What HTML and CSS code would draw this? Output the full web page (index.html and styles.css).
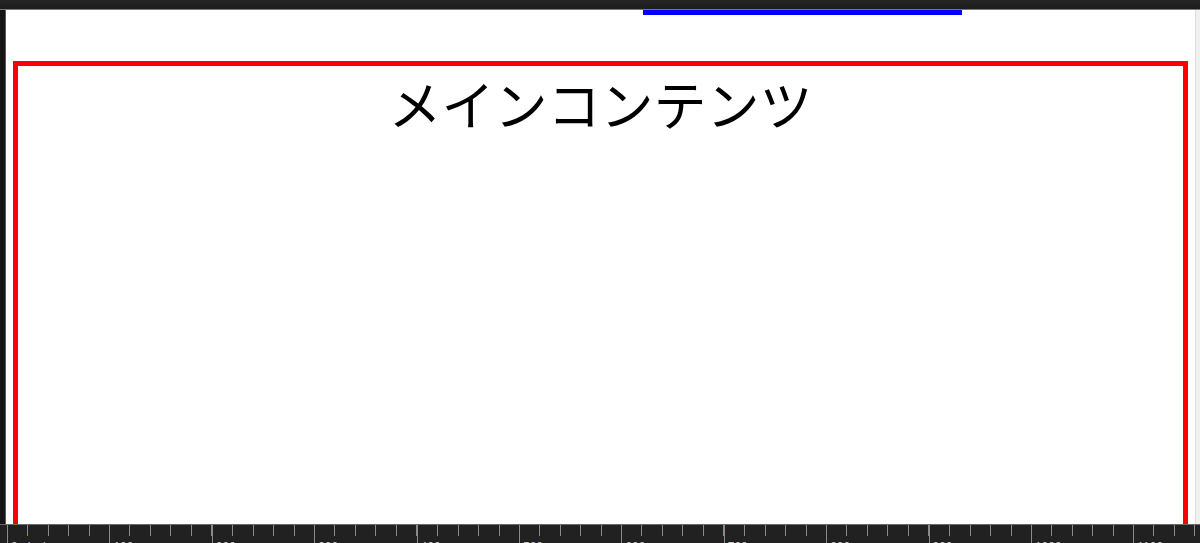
FILE: index.html
```html
<!DOCTYPE html>
<html lang="ja">
<head>
<meta charset="utf-8">
<title>メインコンテンツ</title>
<link rel="stylesheet" href="styles.css">
</head>
<body>
<div class="frame">
  <div class="topbar"></div>
  <div class="middle">
    <div class="leftstrip"></div>
    <div class="viewport">
      <div class="blue-row"><div class="blue-bar"></div></div>
      <div class="main-box">
        <h1 class="main-title">メインコンテンツ</h1>
      </div>
    </div>
    <div class="scrollbar"></div>
  </div>
  <div class="ruler">
    <div class="ruler-ticks">
      <span class="seg">0 pixels</span>
      <span class="seg">100</span>
      <span class="seg">200</span>
      <span class="seg">300</span>
      <span class="seg">400</span>
      <span class="seg">500</span>
      <span class="seg">600</span>
      <span class="seg">700</span>
      <span class="seg">800</span>
      <span class="seg">900</span>
      <span class="seg">1000</span>
      <span class="seg">1100</span>
    </div>
  </div>
</div>
</body>
</html>
```

FILE: styles.css
```css
html, body {
  margin: 0;
  padding: 0;
  background: #1a1a1a;
}
.frame {
  width: 1200px;
  height: 543px;
  display: flex;
  flex-direction: column;
  overflow: hidden;
  font-family: "Noto Sans CJK JP", "Noto Sans", sans-serif;
}
.topbar {
  height: 9px;
  background: linear-gradient(#262626, #1c1c1c);
  border-bottom: 1px solid #7a7a7a;
  flex: none;
}
.middle {
  flex: 1;
  display: flex;
  min-height: 0;
}
.leftstrip {
  width: 5px;
  background: #141414;
  border-right: 1px solid #5a5a5a;
  flex: none;
}
.viewport {
  flex: 1;
  background: #ffffff;
  overflow: hidden;
  display: flex;
  flex-direction: column;
}
.blue-row {
  height: 51px;
  flex: none;
  padding-left: 637px;
}
.blue-bar {
  width: 319px;
  height: 5px;
  background: #0000ff;
}
.main-box {
  margin: 0 7px;
  border: 5px solid #ff0000;
  height: 600px;
  flex: none;
}
.main-title {
  margin: 0;
  padding-top: 6px;
  text-align: center;
  font-weight: 400;
  font-size: 53px;
  line-height: 62px;
  color: #000;
}
.scrollbar {
  width: 4px;
  background: #f0f0f0;
  border-left: 1px solid #dcdcdc;
  flex: none;
}
.ruler {
  height: 18px;
  flex: none;
  background: #212121;
  border-top: 1px solid #6a6a6a;
  padding-left: 7px;
  overflow: hidden;
}
.ruler-ticks {
  display: flex;
  height: 100%;
}
.seg {
  width: 102.4px;
  flex: none;
  height: 100%;
  box-sizing: border-box;
  border-left: 1px solid #8a8a8a;
  background-image: repeating-linear-gradient(to right, transparent 0, transparent 19.48px, #8a8a8a 19.48px, #8a8a8a 20.48px);
  background-size: 100% 11px;
  background-repeat: no-repeat;
  color: #c8c8c8;
  font-family: "Liberation Sans", "DejaVu Sans", sans-serif;
  font-size: 12px;
  line-height: 12px;
  padding-top: 16px;
  padding-left: 3px;
}
```
